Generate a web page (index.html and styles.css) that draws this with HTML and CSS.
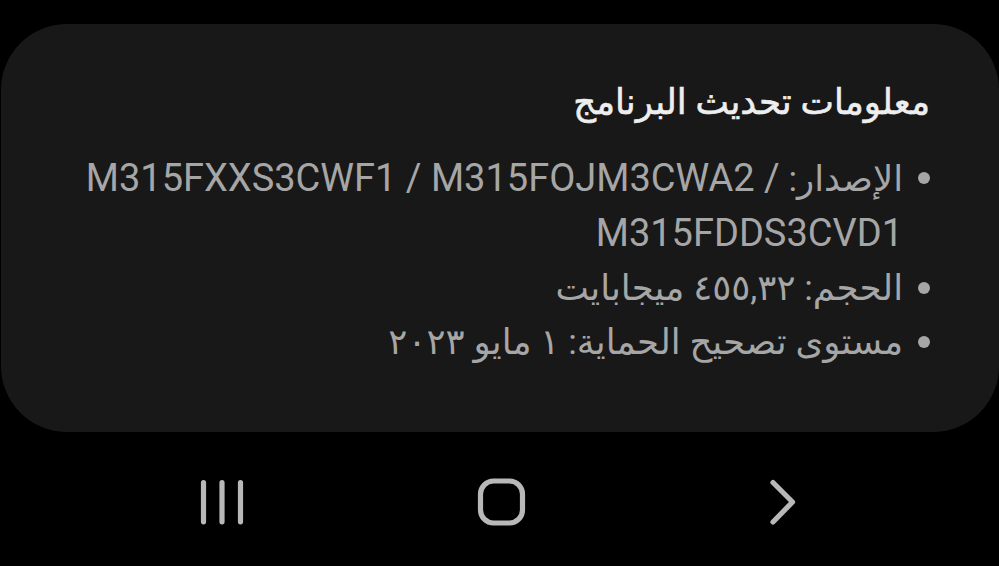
FILE: index.html
```html
<!DOCTYPE html>
<html lang="ar" dir="rtl">
<head>
<meta charset="utf-8">
<title>معلومات تحديث البرنامج</title>
<link rel="stylesheet" href="styles.css">
</head>
<body>
<div class="screen">
  <section class="card">
    <h1 class="title">معلومات تحديث البرنامج</h1>
    <ul class="info">
      <li class="item"><span class="dot"></span><span class="txt">الإصدار: <span class="code">M315FXXS3CWF1 / M315FOJM3CWA2 /&lrm;<br>M315FDDS3CVD1</span></span></li>
      <li class="item"><span class="dot"></span><span class="txt">الحجم: ٤٥٥,٣٢ ميجابايت</span></li>
      <li class="item"><span class="dot"></span><span class="txt">مستوى تصحيح الحماية: ١ مايو ٢٠٢٣</span></li>
    </ul>
  </section>
  <nav class="navbar" dir="ltr">
    <button class="navbtn" aria-label="Recent apps">
      <svg class="navicon" viewBox="0 0 60 60" width="60" height="60">
        <path d="M11.5 10.5V49.8M30 10.5V49.8M48.5 10.5V49.8" />
      </svg>
    </button>
    <button class="navbtn" aria-label="Home">
      <svg class="navicon" viewBox="0 0 60 60" width="60" height="60">
        <rect x="8.5" y="9" width="42" height="42" rx="13" ry="13" />
      </svg>
    </button>
    <button class="navbtn" aria-label="Back">
      <svg class="navicon" viewBox="0 0 60 60" width="60" height="60">
        <path d="M21 10.5L40.5 30L21 50" />
      </svg>
    </button>
  </nav>
</div>
</body>
</html>
```
FILE: styles.css
```css
html, body {
  margin: 0;
  padding: 0;
  background: #000;
}
body {
  width: 999px;
  height: 566px;
  overflow: hidden;
  font-family: "Roboto", "DejaVu Sans", sans-serif;
}
.screen {
  display: flex;
  flex-direction: column;
  height: 566px;
  padding-top: 24px;
  box-sizing: border-box;
}
.card {
  box-sizing: border-box;
  width: 998px;
  height: 408px;
  background: #181818;
  border-radius: 66px;
  padding: 51px 69px 0 40px;
}
.title {
  margin: 0;
  font-size: 35.5px;
  line-height: 54px;
  font-weight: 400;
  color: #eeeeee;
  -webkit-text-stroke: 0.6px #eeeeee;
}
.info {
  list-style: none;
  margin: 22px 0 0;
  padding: 0;
}
.item {
  display: flex;
  align-items: flex-start;
  gap: 15px;
  font-size: 35.5px;
  line-height: 54px;
  color: #a6a6a6;
}
.code {
  font-size: 38px;
}
.dot {
  flex: none;
  width: 12px;
  height: 12px;
  margin-top: 21px;
  border-radius: 50%;
  background: #a6a6a6;
}
.txt {
  display: block;
}
.navbar {
  flex: 1;
  display: flex;
  justify-content: center;
  align-items: center;
  gap: 200px;
  padding: 6px 0 0 4px;
}
.navbtn {
  width: 80px;
  height: 80px;
  padding: 0;
  border: 0;
  background: none;
  display: flex;
  align-items: center;
  justify-content: center;
}
.navicon {
  display: block;
  fill: none;
  stroke: #b8b8b8;
  stroke-width: 5.2;
  stroke-linecap: round;
  stroke-linejoin: round;
}
```
